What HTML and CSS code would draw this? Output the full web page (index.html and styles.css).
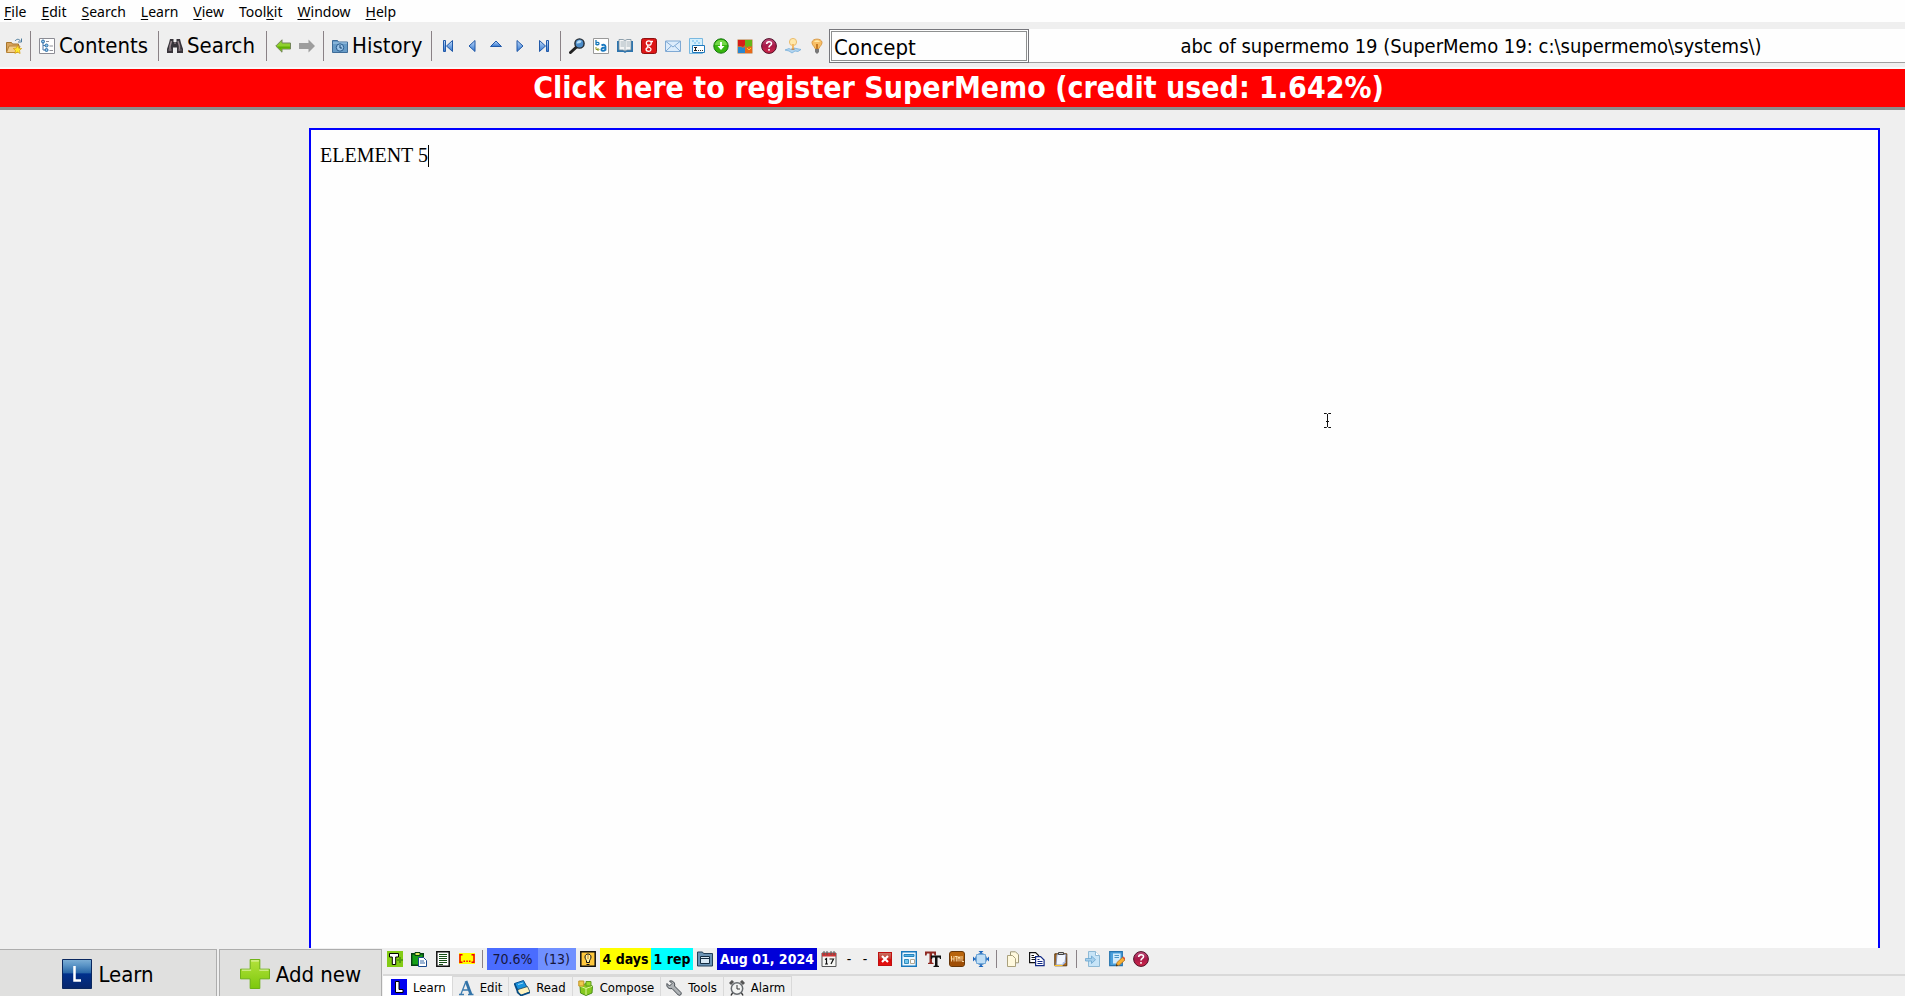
FILE: index.html
```html
<!DOCTYPE html>
<html lang="en">
<head>
<meta charset="utf-8">
<title>abc of supermemo 19</title>
<link rel="stylesheet" href="styles.css">
</head>
<body>
<svg class="sprite" aria-hidden="true">
  <defs>
    <linearGradient id="blue" x1="0" y1="0" x2="0" y2="1"><stop offset="0" stop-color="#c2dcfa"/><stop offset="1" stop-color="#2f74cf"/></linearGradient>
    <linearGradient id="learnfill" x1="0" y1="0" x2="0" y2="1"><stop offset="0" stop-color="#7fb0d6"/><stop offset=".2" stop-color="#5a94c6"/><stop offset=".45" stop-color="#2a68a8"/><stop offset=".5" stop-color="#00308c"/><stop offset="1" stop-color="#07266b"/></linearGradient>
    <linearGradient id="plusfill" x1="0" y1="0" x2="0" y2="1"><stop offset="0" stop-color="#b4e23c"/><stop offset="1" stop-color="#7cc80c"/></linearGradient>
    <linearGradient id="redfill" x1="0" y1="0" x2="0" y2="1"><stop offset="0" stop-color="#c87868"/><stop offset=".5" stop-color="#c83028"/><stop offset=".55" stop-color="#d80808"/><stop offset="1" stop-color="#e81010"/></linearGradient>
    <linearGradient id="helpfill" x1="0" y1="0" x2="0" y2="1"><stop offset="0" stop-color="#c0507c"/><stop offset=".5" stop-color="#a81848"/><stop offset="1" stop-color="#d02848"/></linearGradient>
  </defs>
  <symbol id="open" viewBox="0 0 16 16"><path d="M.5 14V4.500h5l1 1.500h6V9" fill="#d9a45c" stroke="#a8762c"/><path d="M.5 14.500 3 8h11l-2.500 6.500z" fill="#f3cd8a" stroke="#b88438"/><path d="M9 3c2-2.500 4-2 5.500 0M15.500.5v3.500h-3.500" fill="none" stroke="#4a7a9c"/><path d="m11.500 7.500 1.200 2.700 3 .3-2.200 2 .6 3-2.600-1.500-2.600 1.500.6-3-2.200-2 3-.3z" fill="#ffe92c" stroke="#d29a10" stroke-width=".7"/></symbol>
  <symbol id="contents" viewBox="0 0 16 16"><path d="M.5.500h15v15H.5z" fill="#fff" stroke="#8c8c94"/><path d="M4 4v8h3M4 7.500h3" fill="none" stroke="#4c78a8"/><path d="M7 3.500h3M10.500 8H14M10.500 12.500H14" stroke="#909098"/><g fill="#8fc7ec" stroke="#2b6ca5"><circle cx="4" cy="3.500" r="1.500"/><circle cx="7.500" cy="7.500" r="1.500"/><circle cx="7.500" cy="12" r="1.500"/></g></symbol>
  <symbol id="binoculars" viewBox="0 0 16 16"><path d="M3 1h3.500v3h3V1H13l1 4 2 6v4h-6V9.500H6V15H0v-4l2-6z" fill="#38343a"/><path d="M4.500 3 3 8v5M11 3l1.500 5v5M7.200 5h1.600" stroke="#97878d" stroke-width="1.500" fill="none"/><path d="M1 12h4M11 12h4" stroke="#6d6268"/></symbol>
  <symbol id="back" viewBox="0 0 16 16"><path d="M.8 8 7 1.800V5h8.500v6H7v3.200z" fill="#8fd02e" stroke="#74855a"/><path d="M2 8.500h13v2H6.500v2z" fill="#5fb000"/></symbol>
  <symbol id="forward" viewBox="0 0 16 16"><path d="M16 8 9.500 1.500V5H0v6h9.500v3.500z" fill="#9d9d9d"/></symbol>
  <symbol id="history" viewBox="0 0 16 16"><path d="M.5 14.500V2.500h5l1 1.500h9v10.500z" fill="#679bc7" stroke="#3f6c98"/><path d="M1 5h14" stroke="#a9cdea"/><circle cx="8" cy="9.500" r="3.700" fill="#9cc4e8" stroke="#285b8d"/><path d="M8 7v3h2" fill="none" stroke="#174470"/></symbol>
  <symbol id="first" viewBox="0 0 16 16"><path d="M3.500 2.500h2v11h-2zM12.500 2.500v11L6.500 8z" fill="url(#blue)" stroke="#2159a8"/></symbol>
  <symbol id="prev" viewBox="0 0 16 16"><path d="M11 2.500v11L5 8z" fill="url(#blue)" stroke="#2159a8"/></symbol>
  <symbol id="up" viewBox="0 0 16 16"><path d="M2.500 8.500h11L8 3z" fill="url(#blue)" stroke="#2159a8"/></symbol>
  <symbol id="next" viewBox="0 0 16 16"><path d="M5 2.500v11L11 8z" fill="url(#blue)" stroke="#2159a8"/></symbol>
  <symbol id="last" viewBox="0 0 16 16"><path d="M10.500 2.500h2v11h-2zM3.500 2.500v11l6-5.500z" fill="url(#blue)" stroke="#2159a8"/></symbol>
  <symbol id="find" viewBox="0 0 16 16"><path d="m1.500 14.500 6-5.500" stroke="#222" stroke-width="3" stroke-linecap="round"/><circle cx="10.500" cy="5.500" r="4.600" fill="#4c8cc8" stroke="#202830" stroke-width="1.400"/><path d="M7.500 5.500a3 3 0 0 1 5-2.400c-.2 2-2 2.600-5 2.400z" fill="#b8dcf4"/></symbol>
  <symbol id="translate" viewBox="0 0 16 16"><path d="M.5.500h15v15H.5z" fill="#fff" stroke="#999"/><path d="M3 2v5M3 5.500C3 4 6 3.800 6 5.500S3 7 3 6" fill="none" stroke="#1878b8" stroke-width="1.300"/><path d="M8.500 7.500c2-1.500 4-.5 4 1v4M12.500 9.500c-5 0-5 3.500-2.500 3.300 1.500 0 2.500-1 2.500-2" fill="none" stroke="#1878c0" stroke-width="1.800"/><path d="M3 9v2.500h2.500M4.500 10l1.500 1.500L4.500 13" fill="none" stroke="#8a9820"/></symbol>
  <symbol id="book" viewBox="0 0 16 16"><path d="M0 3h16v11H9.500l-1.500 1-1.500-1H0z" fill="#2d74ae"/><path d="M2 1.500h4l2 1 2-1h4v10.500h-4l-2 1-2-1H2z" fill="#f4f5f5" stroke="#758a99" stroke-width=".8"/><path d="M8 3v9.500M3.500 4H7M3.500 6H7M3.500 8H7M9.500 4H13M9.500 6H13M9.500 8H13" stroke="#96a4ae" stroke-width=".8"/></symbol>
  <symbol id="google" viewBox="0 0 16 16"><rect x=".5" y=".5" width="15" height="15" rx="2" fill="#dc1717" stroke="#8e1010"/><path d="M9.500 3.500H12M7.800 2.800c-3.300 0-3.300 4.400 0 4.400s3.300-4.400 0-4.400zM7 7.300c-1.700 1 .5 1.600 1.700 2.200 2.400 1.300 1.200 3.800-1 3.800-3.300 0-3.500-3.200-.5-3.800" stroke="#fff" stroke-width="1.300" fill="none"/></symbol>
  <symbol id="mail" viewBox="0 0 16 16"><path d="M.5 3h15v10.500H.5z" fill="#dcecfb" stroke="#7fa9d4"/><path d="M1 3.500 8 9l7-5.500M1 13l5.200-5M15 13l-5.200-5" fill="none" stroke="#7fa9d4"/></symbol>
  <symbol id="field" viewBox="0 0 16 16"><path d="M.5.500h13v15H.5z" fill="#d4effc" stroke="#79b8e0"/><path d="M3 2h2v2H3zM7 2h2v2H7zM5 4h2v2H5zM9 4h2v2H9z" fill="#9ed5f5"/><path d="M3.500 7.500h12v7h-12z" fill="#fff" stroke="#1f79bd"/><path d="M5 9.500h3M6.500 9.500v3M5 12.500h3" stroke="#222"/><path d="M9 12h1v1H9zM11 12h1v1h-1zM13 12h1v1h-1z" fill="#333"/></symbol>
  <symbol id="download" viewBox="0 0 16 16"><circle cx="8" cy="8" r="7.200" fill="#36b60d" stroke="#16760e"/><path d="M2 7a6 5 0 0 1 12 0z" fill="#75d849"/><path d="M7 4h2v4h2.500L8 12 4.500 8H7z" fill="#fff"/></symbol>
  <symbol id="puzzle" viewBox="0 0 16 16"><path d="M.5 1.500h15v14H.5z" fill="#b87838"/><path d="M1 2h7v5l-2 2-2-1H1z" fill="#d81c18"/><path d="M8 2h7v6l-3 1.500L8 8z" fill="#65b517"/><path d="M1 9h3l2 1 2-1v6H1z" fill="#2886d1"/><path d="M8 9l2 1 2-2 3 1v6H8z" fill="#e86818"/><path d="m10 10 2 2 2-2" stroke="#ffd21e" fill="none"/></symbol>
  <symbol id="help" viewBox="0 0 16 16"><circle cx="8" cy="8" r="7.400" fill="url(#helpfill)" stroke="#501028"/><path d="M5.700 6c0-3 4.900-3 4.800-.3C10.400 7.500 8 7.300 8 9.500M8 11v1.800" fill="none" stroke="#fff" stroke-width="1.600"/></symbol>
  <symbol id="lamp" viewBox="0 0 16 16"><path d="m0 12 4-1.500 2 1 3-1.500 7 1.500-3 2-3-.5L7 15l-3-2z" fill="#b1d4ef" stroke="#6ba9d8" stroke-width=".7"/><circle cx="8" cy="4" r="3.600" fill="#ffe8aa" stroke="#eabd70"/><path d="M7 6h2v5H7z" fill="#f4ba64"/><path d="M6.500 10.500h3v1.500h-3z" fill="#b08e68"/></symbol>
  <symbol id="bulb" viewBox="0 0 16 16"><path d="M3 4.500C3 0 13 0 13 4.500c0 3-2.500 3.500-3 6H6c-.5-2.500-3-3-3-6z" fill="#f8bf65" stroke="#d99a46"/><path d="M5 4c1-2.500 5-2.500 6 0z" fill="#ffe9a5"/><path d="M8 6v5" stroke="#c67c25" stroke-width="2"/><path d="M6 11h4v3l-2 2-2-2z" fill="#777"/></symbol>

  <symbol id="learnbig" viewBox="0 0 30 30"><path d="M.5.500h29v29H.5z" fill="url(#learnfill)" stroke="#0a285f"/><path d="M12.500 7v14.500H19" fill="none" stroke="#fff" stroke-width="2.500"/></symbol>
  <symbol id="plus" viewBox="0 0 31 31"><path d="M10.500.5h10v10h10v10h-10v10h-10v-10H.5v-10h10z" fill="url(#plusfill)" stroke="#6aaf12"/><path d="M11.500 2h8M2 11.500h9.500M20 11.500h9.500" stroke="#e8f7b8"/></symbol>

  <symbol id="template" viewBox="0 0 16 16"><path d="M0 0h16v16H0z" fill="#84cc16"/><path d="M13 6v6M10 9h6" stroke="#54a00c" stroke-width="2"/><path d="M2.500 2.500h9v3.500H8.700v7.500H5.300V6H2.500z" fill="#fff" stroke="#000"/></symbol>
  <symbol id="clip" viewBox="0 0 16 16"><path d="M.7 2.700h11.600v11.600H.7z" fill="#16a017" stroke="#053f12" stroke-width="1.400"/><path d="M4 1.500h5v3H4z" fill="#dbe85a" stroke="#053f12"/><path d="M7.500 6.500h5l3 3v6h-8z" fill="#fff" stroke="#17478c"/><path d="M9 10h4M9 12h5" stroke="#386aa8"/></symbol>
  <symbol id="page" viewBox="0 0 16 16"><path d="M1.800.8h12.400v14.400H1.800z" fill="#fff" stroke="#111" stroke-width="1.500"/><path d="M4 3.500h8M4 5.500h8M4 7.500h8M4 9.500h8M4 11.500h8M4 13.500h4" stroke="#164d16"/></symbol>
  <symbol id="cloze" viewBox="0 0 16 16"><path d="M0 2h16v11H0z" fill="#ffff00"/><path d="M3.500 3.700H1v7.600h2.500M12.500 3.700H15v7.600h-2.500" fill="none" stroke="#f00000" stroke-width="1.500"/><path d="M4.500 9.500H6V11H4.500zM7.300 9.500h1.500V11H7.300zM10 9.500h1.500V11H10z" fill="#f00"/></symbol>
  <symbol id="hint" viewBox="0 0 16 16"><path d="M.8.800h14.400v14.400H.8z" fill="#ffc83c" stroke="#111" stroke-width="1.500"/><path d="M6.500 10v1.500h3V10c0-1 1.500-2 1.500-4 0-4-6-4-6 0 0 2 1.500 3 1.500 4zM6.500 13.500h3" fill="#fff1a0" stroke="#111"/><path d="M8 4v4" stroke="#c88018"/></symbol>
  <symbol id="window" viewBox="0 0 16 16"><path d="M.5 15V1h5l1 1.500h9V15z" fill="#6b93b5" stroke="#233f58"/><path d="M3.500 5.500h9v7h-9z" fill="#d8e8f4" stroke="#142c42"/><path d="M4 7.500h8" stroke="#142c42"/></symbol>
  <symbol id="calendar" viewBox="0 0 16 16"><path d="M1 2h14v13.500H1z" fill="#f8f8f5" stroke="#555"/><path d="M1 2h14v3.500H1z" fill="#cc3636"/><path d="M3 0v4M6 0v4M10 0v4M13 0v4" stroke="#555"/><path d="M4 8.500 5.500 7.500V13M4 13h3M8.500 8h4L10 13" fill="none" stroke="#111" stroke-width="1.200"/></symbol>
  <symbol id="delete" viewBox="0 0 16 16"><rect x="1.500" y="1.500" width="13" height="13" fill="url(#redfill)" stroke="#c01010"/><path d="m5 5 6 6m0-6-6 6" stroke="#fff" stroke-width="2.200"/></symbol>
  <symbol id="layout" viewBox="0 0 16 16"><path d="M.7.700h14.600v14.600H.7z" fill="#edf8ff" stroke="#1878bd" stroke-width="1.400"/><path d="M3 3.500h10v2H3z" fill="#58b4e5" stroke="#2583bd"/><path d="M3.500 8.500h4v4h-4z" fill="#72c6ee" stroke="#348cbc"/><path d="M9.500 8.500h4v4h-4z" fill="#fff" stroke="#b5a790"/></symbol>
  <symbol id="fonts" viewBox="0 0 16 16"><path d="M0 .5h11v4H9.500L9 2.500H7v9l1.500.5v1H3v-1l1.500-.5v-9H2L1.500 4.500H0z" fill="#8e2922"/><path d="M6 4.500h10v3.500h-1l-.5-1.500h-2v8l1.500.5v1H8.500v-1l1.500-.5v-8H7.500L7 8H6z" fill="#111"/></symbol>
  <symbol id="html" viewBox="0 0 16 16"><rect x=".5" y=".5" width="15" height="15" rx="2.500" fill="#b8640c" stroke="#673709"/><path d="M1 8h14v5.500L13 15H3l-2-1.500z" fill="#9f4e06"/><path d="M2.500 5v5.500M5 5v5.500M2.500 8H5M6 5.500h2.500M7.300 5.500v5M9 10.500V5.500l1 2 1-2v5M13 5v5.500h2" fill="none" stroke="#ffe2b0" stroke-width=".9"/></symbol>
  <symbol id="target" viewBox="0 0 16 16"><circle cx="8" cy="8" r="5.500" fill="#d4e9fa" stroke="#3a78be"/><path d="M3.500 3.500h9v9h-9z" fill="#bfddf5" stroke="#70a8d8"/><path d="M5.500 0h5L8 2.500zM5.500 16h5L8 13.500zM0 5.500v5L2.500 8zM16 5.500v5L13.500 8z" fill="#1865bd"/></symbol>
  <symbol id="pages" viewBox="0 0 16 16"><path d="M5.500.8h5l3 3v8h-8z" fill="#fff9de" stroke="#9e9878"/><path d="M2.500 4.500h5l3 3v8h-8z" fill="#fff9de" stroke="#aaa17d"/></symbol>
  <symbol id="copy" viewBox="0 0 16 16"><path d="M.6 1.600h6l3 3v7h-9z" fill="#fff" stroke="#111" stroke-width="1.200"/><path d="M2.500 4.500H5M2.500 6.500h5M2.500 8.500h4" stroke="#111"/><path d="M6.600 5.600h5l3.500 3.500v5.500H6.600z" fill="#fff" stroke="#132a85" stroke-width="1.200"/><path d="M8.500 8.500h2M8.500 10.500h5M8.500 12.500h5" stroke="#132a85"/></symbol>
  <symbol id="paste" viewBox="0 0 16 16"><path d="M1.800 2.800h12v12h-12z" fill="#b86e1a" stroke="#593815"/><path d="M4 3.500h9l-1 8.500-2.500 2H3z" fill="#f1f6ff" stroke="#8995b5"/><path d="M5.500 3.500V1.500h5v2z" fill="#ccc" stroke="#444"/><path d="m9 14 1-3h3z" fill="#adc3ed"/><path d="M1.500 14.500h8" stroke="#ffc52b"/></symbol>
  <symbol id="import" viewBox="0 0 16 16"><path d="M3.500.500h7l4 4v11h-11z" fill="#c7e4f7" stroke="#8eb9d5"/><path d="M10.500.5v4h4" fill="#fff" stroke="#8eb9d5"/><path d="M.5 7.500h6V5l4 3.700-4 3.800V10h-6z" fill="#a5cfec" stroke="#6aa4ce" stroke-width=".8"/></symbol>
  <symbol id="edit" viewBox="0 0 16 16"><path d="M.7.700h12.600v14H.7z" fill="#4ba0dc" stroke="#2573ae" stroke-width="1.200"/><path d="M4 2.500h7.500v10H4z" fill="#cfeafb"/><path d="M5.500 4.500H10M5.500 6.500H10" stroke="#4b94c5"/><path d="m7 15 1-3.500 5.500-5.200L16 9l-5.500 5z" fill="#f7af33" stroke="#ad7022" stroke-width=".8"/><path d="m13.500 6.300 1-.8L16 7v2z" fill="#e74c34"/><path d="m7 15 .5-2 1.500 1.500z" fill="#222"/></symbol>

  <symbol id="tablearn" viewBox="0 0 16 16"><path d="M0 0h16v16H0z" fill="#0000f0"/><path d="M4.500 2.500h3.500v8h4v3H4.500z" fill="#fff" stroke="#000"/></symbol>
  <symbol id="taba" viewBox="0 0 16 16"><path d="M1 14.500h5M10 14.500h5.500M3 14 7.500 2.500M5 10h5" stroke="#3c7cb0" stroke-width="1.300"/><path d="m8 1 5 13.500" stroke="#3273a8" stroke-width="2.800"/></symbol>
  <symbol id="tabread" viewBox="0 0 16 16"><path d="m.5 3.500 9-3 4 7.500-9 3z" fill="#1993dd" stroke="#075092"/><path d="m4 9.500 9.500-3L16 12l-9 3.500-4-3z" fill="#fff2bd" stroke="#1b405a" stroke-width=".8"/><path d="m.5 3.500 3.500 9 3 3 9-3.200" fill="none" stroke="#064b84" stroke-width="1.700"/><path d="m4 4.500 5-1.500" stroke="#96d7f8"/></symbol>
  <symbol id="tabcompose" viewBox="0 0 16 16"><path d="m2 6 6-2.500L14.500 6 14 13l-6 2.500L2.500 13z" fill="#85c91d" stroke="#4b901a"/><path d="m2 6 6 2.500L14.500 6M8 8.500V15" fill="none" stroke="#dff499"/><path d="M.8 1h5v5h-5z" fill="#edcb4e" stroke="#c29324"/><path d="M8 1.500h5V6H8z" fill="#9cda2e" stroke="#609a20"/></symbol>
  <symbol id="tabtools" viewBox="0 0 16 16"><path d="M1 3.500 3.500 6 6 3.500 3.500 1C7 .2 9.500 3 8.500 6l6.500 6.500c1 2-1 3.500-2.700 2.500L6 8.500C3 9.500 0 7 1 3.500z" fill="#aeb2b5" stroke="#444a50"/></symbol>
  <symbol id="tabalarm" viewBox="0 0 16 16"><path d="m1 4 3-3M15 4l-3-3" stroke="#555" stroke-width="3"/><path d="m4 12-2 3.500M12 12l2 3.500" stroke="#333" stroke-width="1.500"/><circle cx="8" cy="8.500" r="5.700" fill="#f2f3f2" stroke="#666a6e" stroke-width="1.500"/><path d="M8 5v4h3" fill="none" stroke="#333"/></symbol>
</svg>

<div class="app">
  <nav class="menu" aria-label="Main menu">
    <button><u>F</u>ile</button><button><u>E</u>dit</button><button><u>S</u>earch</button><button><u>L</u>earn</button><button><u>V</u>iew</button><button>Tool<u>k</u>it</button><button><u>W</u>indow</button><button><u>H</u>elp</button>
  </nav>

  <header class="toolbar">
    <div class="tools">
      <button class="tool" aria-label="Open"><svg class="icon"><use href="#open"/></svg></button>
      <i class="rule"></i>
      <button class="labelled contents"><svg class="icon"><use href="#contents"/></svg>Contents</button>
      <i class="rule"></i>
      <button class="labelled"><svg class="icon"><use href="#binoculars"/></svg>Search</button>
      <i class="rule"></i>
      <button class="tool" aria-label="Back"><svg class="icon"><use href="#back"/></svg></button>
      <button class="tool" aria-label="Forward"><svg class="icon"><use href="#forward"/></svg></button>
      <i class="rule"></i>
      <button class="labelled"><svg class="icon"><use href="#history"/></svg>History</button>
      <i class="rule"></i>
      <button class="tool" aria-label="First"><svg class="icon"><use href="#first"/></svg></button>
      <button class="tool" aria-label="Previous"><svg class="icon"><use href="#prev"/></svg></button>
      <button class="tool" aria-label="Parent"><svg class="icon"><use href="#up"/></svg></button>
      <button class="tool" aria-label="Next"><svg class="icon"><use href="#next"/></svg></button>
      <button class="tool" aria-label="Last"><svg class="icon"><use href="#last"/></svg></button>
      <i class="rule"></i>
      <button class="tool" aria-label="Find"><svg class="icon"><use href="#find"/></svg></button>
      <button class="tool" aria-label="Translate"><svg class="icon"><use href="#translate"/></svg></button>
      <button class="tool" aria-label="Dictionary"><svg class="icon"><use href="#book"/></svg></button>
      <button class="tool" aria-label="Web search"><svg class="icon"><use href="#google"/></svg></button>
      <button class="tool" aria-label="Mail"><svg class="icon"><use href="#mail"/></svg></button>
      <button class="tool" aria-label="Fields"><svg class="icon"><use href="#field"/></svg></button>
      <button class="tool" aria-label="Download"><svg class="icon"><use href="#download"/></svg></button>
      <button class="tool" aria-label="Layouts"><svg class="icon"><use href="#puzzle"/></svg></button>
      <button class="tool" aria-label="Help"><svg class="icon"><use href="#help"/></svg></button>
      <button class="tool" aria-label="Guide"><svg class="icon"><use href="#lamp"/></svg></button>
      <button class="tool" aria-label="Tips"><svg class="icon"><use href="#bulb"/></svg></button>
    </div>
    <div class="concept"><input type="text" value="Concept" aria-label="Concept"></div>
    <div class="title">abc of supermemo 19 (SuperMemo 19: c:\supermemo\systems\)</div>
  </header>

  <button class="register">Click here to register SuperMemo (credit used: 1.642%)</button>

  <main class="workspace">
    <div class="editor" role="textbox" contenteditable="true" spellcheck="false" aria-label="Element text">ELEMENT 5<span class="caret"></span></div>
    <svg class="pointer" viewBox="0 0 9 17"><path d="M1 1.500h2.500l1 1 1-1H8M4.500 2v13M1 15.500h2.500l1-1 1 1H8M3 9.500h3" fill="none" stroke="#111"/></svg>
  </main>

  <footer class="dock">
    <button class="big learn"><svg class="bigicon"><use href="#learnbig"/></svg>Learn</button>
    <button class="big add"><svg class="bigicon"><use href="#plus"/></svg>Add new</button>
    <div class="panel">
      <div class="status">
        <button class="tool" aria-label="Template"><svg class="icon"><use href="#template"/></svg></button>
        <button class="tool" aria-label="Paste article"><svg class="icon"><use href="#clip"/></svg></button>
        <button class="tool" aria-label="Extract"><svg class="icon"><use href="#page"/></svg></button>
        <button class="tool" aria-label="Cloze"><svg class="icon"><use href="#cloze"/></svg></button>
        <i class="rule"></i>
        <span class="cell priority">70.6%</span><span class="cell position">(13)</span>
        <button class="tool" aria-label="Hint"><svg class="icon"><use href="#hint"/></svg></button>
        <span class="cell days">4 days</span><span class="cell reps">1 rep</span>
        <button class="tool" aria-label="Element window"><svg class="icon"><use href="#window"/></svg></button>
        <span class="cell date">Aug 01, 2024</span>
        <button class="tool" aria-label="Calendar"><svg class="icon"><use href="#calendar"/></svg></button>
        <span class="dash">-</span><span class="dash">-</span>
        <button class="tool" aria-label="Delete"><svg class="icon"><use href="#delete"/></svg></button>
        <button class="tool" aria-label="Layout"><svg class="icon"><use href="#layout"/></svg></button>
        <button class="tool" aria-label="Fonts"><svg class="icon"><use href="#fonts"/></svg></button>
        <button class="tool" aria-label="HTML"><svg class="icon"><use href="#html"/></svg></button>
        <button class="tool" aria-label="Center"><svg class="icon"><use href="#target"/></svg></button>
        <i class="rule"></i>
        <button class="tool" aria-label="Duplicate"><svg class="icon"><use href="#pages"/></svg></button>
        <button class="tool" aria-label="Copy"><svg class="icon"><use href="#copy"/></svg></button>
        <button class="tool" aria-label="Paste"><svg class="icon"><use href="#paste"/></svg></button>
        <i class="rule"></i>
        <button class="tool" aria-label="Import"><svg class="icon"><use href="#import"/></svg></button>
        <button class="tool" aria-label="Edit notes"><svg class="icon"><use href="#edit"/></svg></button>
        <button class="tool" aria-label="Help"><svg class="icon"><use href="#help"/></svg></button>
      </div>
      <div class="tabs" role="tablist">
        <button class="tab selected" role="tab" aria-selected="true"><svg class="icon"><use href="#tablearn"/></svg>Learn</button>
        <button class="tab" role="tab"><svg class="icon"><use href="#taba"/></svg>Edit</button>
        <button class="tab" role="tab"><svg class="icon"><use href="#tabread"/></svg>Read</button>
        <button class="tab" role="tab"><svg class="icon"><use href="#tabcompose"/></svg>Compose</button>
        <button class="tab" role="tab"><svg class="icon"><use href="#tabtools"/></svg>Tools</button>
        <button class="tab" role="tab"><svg class="icon"><use href="#tabalarm"/></svg>Alarm</button>
      </div>
    </div>
  </footer>
</div>
</body>
</html>
```
FILE: styles.css
```css
* { box-sizing: border-box; }

body {
  margin: 0;
  background: #efefef;
  color: #000;
  font-family: "DejaVu Sans Condensed", "DejaVu Sans", sans-serif;
}

button {
  margin: 0;
  padding: 0;
  border: 0;
  background: none;
  color: inherit;
  font: inherit;
  white-space: nowrap;
}

.sprite { position: absolute; width: 0; height: 0; }

.app {
  display: flex;
  flex-direction: column;
  height: 100vh;
  overflow: hidden;
}

.icon { display: block; flex: none; width: 16px; height: 16px; }

/* menu */
.menu {
  display: flex;
  flex: none;
  gap: 15px;
  height: 22px;
  padding-left: 4px;
  background: #fefefe;
  font: 14px/24px "Noto Sans", sans-serif;
}
.menu u { text-underline-offset: 2px; }

/* top toolbar */
.toolbar {
  display: flex;
  flex: none;
  align-items: center;
  height: 47px;
  padding-top: 3px;
  border-bottom: 2px solid #fafafa;
}
.tools { display: flex; flex: none; align-items: center; padding-left: 2px; }
.tool {
  display: flex;
  flex: none;
  align-items: center;
  justify-content: center;
  width: 24px;
  height: 24px;
}
.rule {
  flex: none;
  width: 1px;
  height: 30px;
  margin: 0 4px;
  background: #8a8286;
}
.labelled {
  display: flex;
  align-items: center;
  gap: 4px;
  width: 99px;
  padding-left: 4px;
  font-size: 22px;
  line-height: 30px;
}
.contents { width: 119px; }

.concept {
  flex: none;
  width: 200px;
  height: 34px;
  padding: 1px;
  border: 1px solid #77777c;
  background: #fefefe;
}
.concept input {
  display: block;
  width: 196px;
  height: 30px;
  padding: 2px 2px 0;
  border: 1px solid #8e9090;
  background: #fefefe;
  color: #000;
  font: 22px "DejaVu Sans Condensed", "DejaVu Sans", sans-serif;
}
.title {
  flex: 1;
  height: 34px;
  padding-left: 8px;
  border-bottom: 1px solid #a0a0a0;
  background: #fefefe;
  font-size: 20px;
  line-height: 34px;
  text-align: center;
  white-space: nowrap;
}

.register {
  flex: none;
  height: 41px;
  padding-left: 12px;
  border-bottom: 3px solid #8c8c8c;
  background: #f00;
  color: #fff;
  font-size: 30px;
  font-weight: bold;
  line-height: 38px;
}

/* element window */
.workspace {
  position: relative;
  display: flex;
  flex: 1;
  min-height: 0;
  padding: 18px 25px 0 309px;
}
.editor {
  flex: 1;
  padding: 13px 9px;
  border: 2px solid #0000ff;
  border-bottom: 0;
  background: #fefefe;
  font: 20px/24px "Liberation Serif", serif;
}
.caret {
  display: inline-block;
  width: 1px;
  height: 22px;
  background: #000;
  vertical-align: -5px;
}
.pointer { position: absolute; left: 1323px; top: 302px; width: 9px; height: 17px; }

/* bottom dock */
.dock { display: flex; flex: none; height: 48px; }
.big {
  display: flex;
  flex: none;
  align-items: center;
  justify-content: center;
  gap: 6px;
  height: 50px;
  margin-top: 1px;
  border: 1px solid #adadad;
  background: #e0e0df;
  font-size: 22px;
}
.learn { width: 217px; border-left: 0; }
.add { width: 163px; margin-left: 2px; }
.bigicon { flex: none; width: 30px; height: 30px; }

.panel { flex: 1; min-width: 0; margin-left: 1px; }
.status {
  display: flex;
  align-items: center;
  height: 26px;
  padding-bottom: 4px;
  font-size: 14px;
}
.status .rule { height: 18px; margin: 0 4px 0 3px; }
.cell { flex: none; line-height: 22px; text-align: center; white-space: nowrap; }
.priority { width: 51px; background: #4a6cff; color: #16163c; }
.position { width: 38px; background: #7090ff; color: #16163c; }
.days { width: 51px; background: #ffff00; font-weight: bold; }
.reps { width: 42px; background: #00ffff; font-weight: bold; }
.date { width: 100px; background: #0000d8; color: #fff; font-weight: bold; }
.dash { flex: none; width: 16px; text-align: center; }

.tabs {
  display: flex;
  align-items: flex-start;
  height: 24px;
  border-top: 2px solid #d9d9d9;
  font-size: 13px;
}
.tab {
  display: flex;
  align-items: center;
  gap: 6px;
  height: 22px;
  padding: 0 6px 0 5px;
  border-top: 1px solid #d9d9d9;
  border-right: 1px solid #d9d9d9;
}
.tab.selected { padding-left: 8px; border-top: 0; background: #fefefe; }
```
